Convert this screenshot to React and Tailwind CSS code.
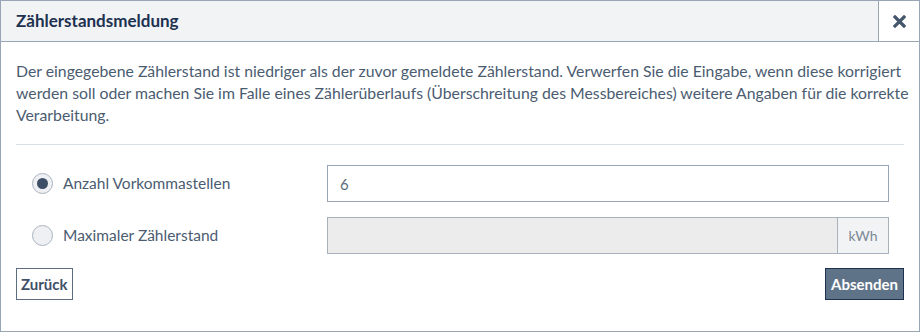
import React, { useState } from 'react';

const Radio = ({ checked, onClick }) => (
  <button
    type="button"
    onClick={onClick}
    className="flex h-[21px] w-[21px] shrink-0 items-center justify-center rounded-full border border-[#a9b4c0] bg-[#eef0f3]"
  >
    {checked && <span className="h-[11px] w-[11px] rounded-full bg-[#3d4f66]" />}
  </button>
);

export default function App() {
  const [mode, setMode] = useState('digits');

  return (
    <div className="h-[332px] w-[920px] bg-white font-['Lato',sans-serif] text-[#4b5c71]">
      <div className="flex h-full flex-col border border-[#97a5b4]">
        {/* header */}
        <div className="flex h-[41px] shrink-0 border-b border-[#97a5b4] bg-[#f1f3f5]">
          <h1 className="flex flex-1 items-center pl-[15px] text-[17px] font-bold text-[#1d3150]">
            Zählerstandsmeldung
          </h1>
          <button type="button" className="flex w-[41px] items-center justify-center border-l border-[#97a5b4] bg-white">
            <svg width="13" height="13" viewBox="0 0 13 13">
              <path d="M2 2 L11 11 M11 2 L2 11" stroke="#44566c" strokeWidth="3.2" strokeLinecap="square" />
            </svg>
          </button>
        </div>

        {/* body */}
        <div className="flex flex-1 flex-col px-[15px]">
          <p className="whitespace-nowrap pt-[18px] pb-[18px] text-[15.8px] leading-[22px]">
            Der eingegebene Zählerstand ist niedriger als der zuvor gemeldete Zählerstand. Verwerfen Sie die Eingabe, wenn diese korrigiert
            <br />
            werden soll oder machen Sie im Falle eines Zählerüberlaufs (Überschreitung des Messbereiches) weitere Angaben für die korrekte
            <br />
            Verarbeitung.
          </p>
          <div className="h-px bg-[#d9dfe6]" />

          <div className="flex flex-col gap-[15px] pt-[20px] pr-[15px] pl-[16px]">
            <div className="flex items-center">
              <div className="flex w-[295px] items-center gap-[10px]">
                <Radio checked={mode === 'digits'} onClick={() => setMode('digits')} />
                <span className="text-[15.5px]">Anzahl Vorkommastellen</span>
              </div>
              <input
                defaultValue="6"
                className="h-[37px] flex-1 border border-[#97a5b4] bg-white px-[12px] text-[15px] text-[#5d6b7b] outline-none"
              />
            </div>
            <div className="flex items-center">
              <div className="flex w-[295px] items-center gap-[10px]">
                <Radio checked={mode === 'max'} onClick={() => setMode('max')} />
                <span className="text-[15.5px]">Maximaler Zählerstand</span>
              </div>
              <div className="flex h-[37px] flex-1 border border-[#a7b2bd]">
                <input disabled className="min-w-0 flex-1 bg-[#ececec] px-[12px] outline-none" />
                <span className="flex w-[51px] items-center justify-center border-l border-[#a7b2bd] bg-[#f2f3f5] text-[14px] text-[#7b8896]">
                  kWh
                </span>
              </div>
            </div>
          </div>

          <div className="flex items-start justify-between pt-[14px]">
            <button type="button" className="h-[32px] border border-[#5d6d80] px-[4px] text-[15px] font-bold text-[#3f5169]">
              Zurück
            </button>
            <button type="button" className="h-[32px] border border-[#1d3150] bg-[#5f7388] px-[5px] text-[15px] font-bold text-white">
              Absenden
            </button>
          </div>
        </div>
      </div>
    </div>
  );
}
